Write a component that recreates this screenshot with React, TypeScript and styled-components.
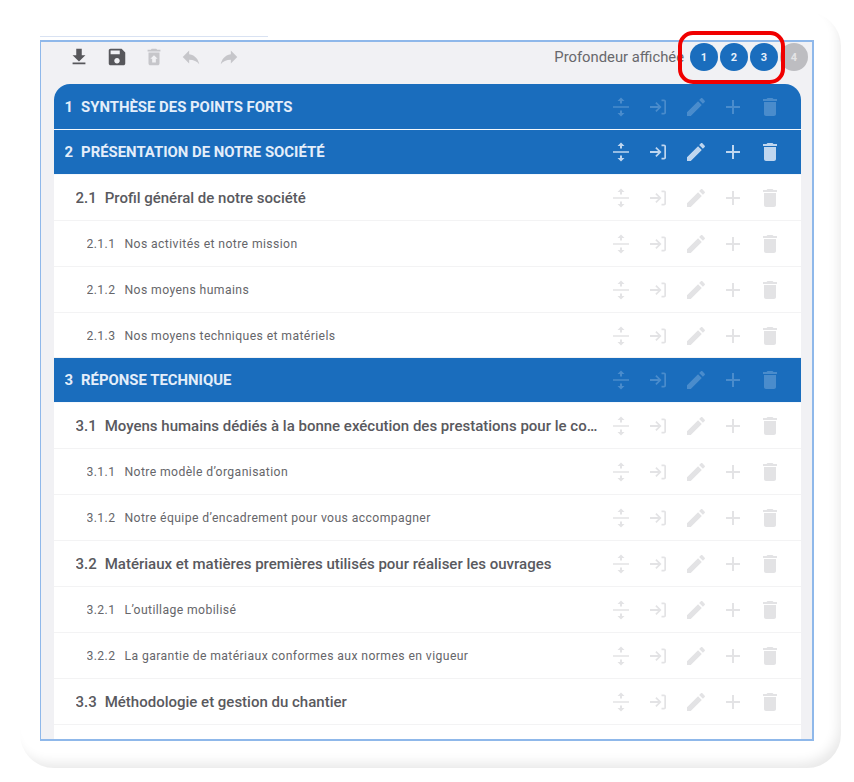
import { createGlobalStyle } from "styled-components";
import styled from "styled-components";

const GlobalStyle = createGlobalStyle`
  html, body {
    margin: 0;
    padding: 0;
    background: #fff;
    font-family: Roboto, "Liberation Sans", sans-serif;
  }
`;

const Page = styled.div`
  width: 854px;
  height: 782px;
  box-sizing: border-box;
  padding: 12px 0 0 20px;
  overflow: hidden;
`;

const Card = styled.div`
  position: relative;
  width: 821px;
  height: 756px;
  box-sizing: border-box;
  padding: 28px 0 0 20px;
  border-radius: 34px;
  background: #fff;
  box-shadow: inset -6px -9px 12px -4px rgba(0, 0, 0, 0.09);
`;

const TopLine = styled.div`
  position: absolute;
  left: 20px;
  top: 24px;
  width: 228px;
  height: 1px;
  background: #d9e2f2;
`;

const Frame = styled.div`
  width: 774px;
  height: 701px;
  box-sizing: border-box;
  border: 2px solid #8fb8ea;
  border-left-width: 1.5px;
  background: #f1f1f4;
  overflow: hidden;
`;

const Toolbar = styled.div`
  height: 42px;
  box-sizing: border-box;
  display: flex;
  align-items: center;
  padding: 0 4px 12px 19.5px;
`;

const ToolIcons = styled.div`
  display: flex;
  flex: 1;
`;

const ToolIcon = styled.span<{ $off?: boolean }>`
  width: 37.4px;
  display: flex;
  justify-content: center;
  color: ${(p) => (p.$off ? "#c6c6ca" : "#57575b")};
`;

const Label = styled.span`
  margin-right: 6px;
  font-size: 14.8px;
  color: #68686c;
  white-space: nowrap;
`;

const Depth = styled.div`
  display: flex;
  gap: 2px;
`;

const Dot = styled.span<{ $off?: boolean }>`
  width: 28px;
  height: 28px;
  border-radius: 50%;
  display: flex;
  align-items: center;
  justify-content: center;
  font-size: 11px;
  font-weight: 700;
  color: ${(p) => (p.$off ? "#e4e4e6" : "#e6f0fb")};
  background: ${(p) => (p.$off ? "#bdbdc1" : "#1a6dbd")};
`;

const Highlight = styled.div`
  position: absolute;
  left: 658px;
  top: 19px;
  width: 107px;
  height: 53px;
  box-sizing: border-box;
  border: 4.5px solid #f00000;
  border-radius: 15px;
`;

const List = styled.div`
  margin-left: 12.5px;
  width: 747px;
  height: 655px;
  background: #fff;
  border-radius: 16px 16px 0 0;
  overflow: hidden;
`;

const Row = styled.div<{ $level: number; $height: number }>`
  height: ${(p) => p.$height}px;
  box-sizing: border-box;
  display: flex;
  align-items: center;
  padding-left: ${(p) => (p.$level === 1 ? 11 : p.$level === 2 ? 22 : 33)}px;
  padding-top: ${(p) => (p.$level === 3 ? 1 : 0)}px;
  background: ${(p) => (p.$level === 1 ? "#1a6dbd" : "#fff")};
  color: ${(p) => (p.$level === 1 ? "#e4eefa" : p.$level === 2 ? "#59595e" : "#66666a")};
  font-size: ${(p) => (p.$level === 1 ? 14.9 : p.$level === 2 ? 15 : 12.2)}px;
  font-weight: ${(p) => (p.$level === 3 ? 400 : p.$level === 2 ? 500 : 700)};
  letter-spacing: ${(p) => (p.$level === 3 ? "0.4px" : "0")};
  border-bottom: 1px solid ${(p) => (p.$level === 1 ? "#f4f8fd" : "#f3f3f4")};
`;

const RowTitle = styled.div`
  flex: 1;
  min-width: 0;
  overflow: hidden;
  white-space: nowrap;
  text-overflow: ellipsis;
`;

const Num = styled.span<{ $level: number }>`
  margin-right: ${(p) => (p.$level === 3 ? 9 : 8)}px;
`;

const Actions = styled.div`
  display: flex;
  flex: none;
  margin-left: 4px;
  padding-right: 11.5px;
`;

const ActionIcon = styled.span<{ $tone: "bright" | "dim" | "grey" }>`
  width: 37.4px;
  display: flex;
  justify-content: center;
  color: ${(p) =>
    p.$tone === "bright" ? "#bfd6ef" : p.$tone === "dim" ? "#4a8ccc" : "#e3e3e5"};
`;

const Glyph = ({ d, size }: { d: string; size: number }) => (
  <svg width={size} height={size} viewBox="0 0 24 24" fill="currentColor">
    <path d={d} />
  </svg>
);

const tools = [
  { d: "M5 20h14v-2H5v2zM19 10h-4V3H9v7H5l7 7 7-7z" },
  { d: "M17 3H5c-1.11 0-2 .9-2 2v14c0 1.1.89 2 2 2h14c1.1 0 2-.9 2-2V7l-4-4zm-5 16c-1.66 0-3-1.34-3-3s1.34-3 3-3 3 1.34 3 3-1.34 3-3 3zm3-10H5V5h10v4z" },
  { d: "M19 4h-3.5l-1-1h-5l-1 1H5v2h14zM6 7v12c0 1.1.9 2 2 2h8c1.1 0 2-.9 2-2V7H6zm8 7v4h-4v-4H8l4-4 4 4h-2z", off: true },
  { d: "M10 9V5l-7 7 7 7v-4.1c5 0 8.5 1.6 11 5.1-1-5-4-10-11-11z", off: true },
  { d: "M14 9V5l7 7-7 7v-4.1c-5 0-8.5 1.6-11 5.1 1-5 4-10 11-11z", off: true },
];

const actions = [
  "M4 11.2h16v1.6H4zM12 2.5 15.5 6H13v2.5h-2V6H8.5zM12 21.5 8.5 18H11v-2.5h2V18h2.5z",
  "M10.5 7 9.3 8.2l2.8 2.8H4v2h8.1l-2.8 2.8 1.2 1.2 5-5zM15.5 4.5H18c1.2 0 2 .8 2 2v11c0 1.2-.8 2-2 2h-2.5v-1.7H18c.2 0 .3-.1.3-.3v-11c0-.2-.1-.3-.3-.3h-2.5z",
  "M3 17.25V21h3.75L17.81 9.94l-3.75-3.75L3 17.25zM20.71 7.04c.39-.39.39-1.02 0-1.41l-2.34-2.34c-.39-.39-1.02-.39-1.41 0l-1.83 1.83 3.75 3.75 1.83-1.83z",
  "M19 13h-6v6h-2v-6H5v-2h6V5h2v6h6v2z",
  "M6 19c0 1.1.9 2 2 2h8c1.1 0 2-.9 2-2V7H6v12zM19 4h-3.5l-1-1h-5l-1 1H5v2h14V4z",
];

const rows = [
  { level: 1, h: 46, num: "1", title: "SYNTHÈSE DES POINTS FORTS", tone: "dim" },
  { level: 1, h: 45, num: "2", title: "PRÉSENTATION DE NOTRE SOCIÉTÉ", tone: "bright" },
  { level: 2, h: 46, num: "2.1", title: "Profil général de notre société" },
  { level: 3, h: 46, num: "2.1.1", title: "Nos activités et notre mission" },
  { level: 3, h: 46, num: "2.1.2", title: "Nos moyens humains" },
  { level: 3, h: 45, num: "2.1.3", title: "Nos moyens techniques et matériels" },
  { level: 1, h: 45, num: "3", title: "RÉPONSE TECHNIQUE", tone: "dim" },
  { level: 2, h: 46, num: "3.1", title: "Moyens humains dédiés à la bonne exécution des prestations pour le compte de notre client" },
  { level: 3, h: 46, num: "3.1.1", title: "Notre modèle d’organisation" },
  { level: 3, h: 46, num: "3.1.2", title: "Notre équipe d’encadrement pour vous accompagner" },
  { level: 2, h: 46, num: "3.2", title: "Matériaux et matières premières utilisés pour réaliser les ouvrages" },
  { level: 3, h: 46, num: "3.2.1", title: "L’outillage mobilisé" },
  { level: 3, h: 46, num: "3.2.2", title: "La garantie de matériaux conformes aux normes en vigueur" },
  { level: 2, h: 46, num: "3.3", title: "Méthodologie et gestion du chantier" },
] as const;

export default function App() {
  return (
    <Page>
      <GlobalStyle />
      <Card>
        <TopLine />
        <Frame>
          <Toolbar>
            <ToolIcons>
              {tools.map((t) => (
                <ToolIcon key={t.d} $off={"off" in t}>
                  <Glyph d={t.d} size={22} />
                </ToolIcon>
              ))}
            </ToolIcons>
            <Label>Profondeur affichée</Label>
            <Depth>
              <Dot>1</Dot>
              <Dot>2</Dot>
              <Dot>3</Dot>
              <Dot $off>4</Dot>
            </Depth>
          </Toolbar>
          <List>
            {rows.map((r) => (
              <Row key={r.num} $level={r.level} $height={r.h}>
                <RowTitle>
                  <Num $level={r.level}>{r.num}</Num>
                  {r.title}
                </RowTitle>
                <Actions>
                  {actions.map((d) => (
                    <ActionIcon key={d} $tone={"tone" in r ? r.tone : "grey"}>
                      <Glyph d={d} size={24} />
                    </ActionIcon>
                  ))}
                </Actions>
              </Row>
            ))}
          </List>
        </Frame>
        <Highlight />
      </Card>
    </Page>
  );
}
